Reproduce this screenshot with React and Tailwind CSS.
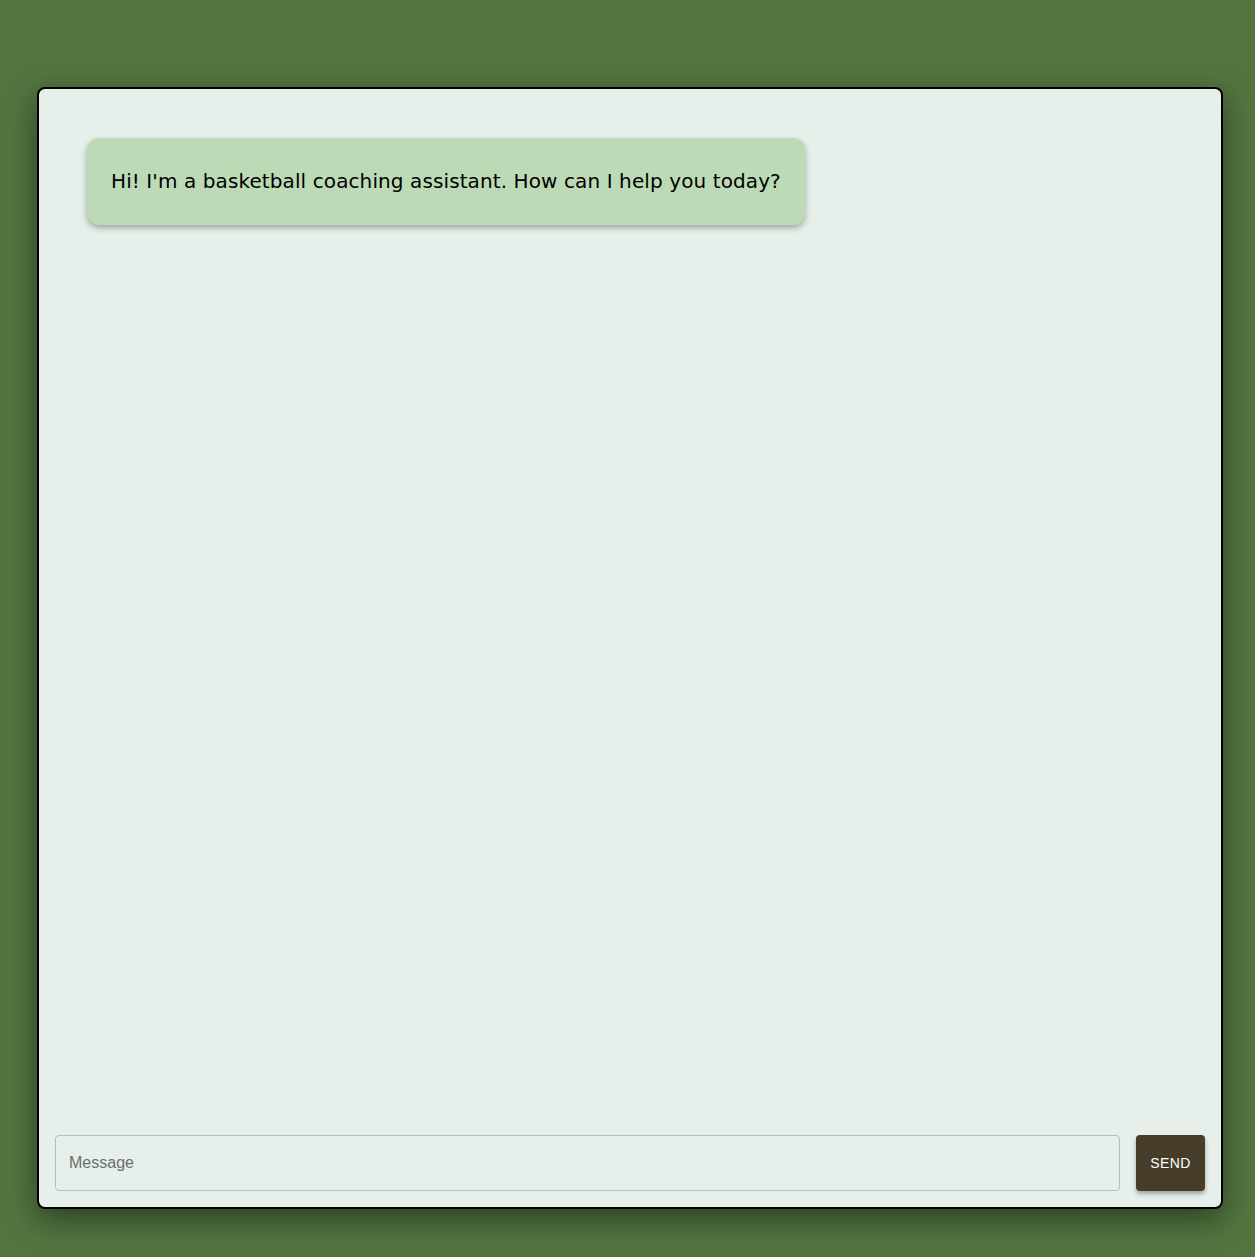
import React from "react";

export default function App() {
  return (
    <div className="w-[1255px] h-[1257px] bg-[#527540] pt-[87px] pl-[37px]">
      <div className="w-[1186px] h-[1122px] border-2 border-black rounded-[8px] bg-[#e6efe9] shadow-[0_10px_30px_rgba(0,0,0,0.45)] flex flex-col">
        <div className="flex-1 pl-[48px] pt-[49px]">
          <div
            className="inline-block bg-[#bcdab6] rounded-[12px] px-[24px] py-[30px] text-[20px] leading-[27px] tracking-[0.1px] text-black shadow-[0_3px_6px_rgba(0,0,0,0.3)]"
            style={{ fontFamily: "'DejaVu Sans', Verdana, sans-serif" }}
          >
            Hi! I'm a basketball coaching assistant. How can I help you today?
          </div>
        </div>
        <div className="flex gap-4 px-[16px] pb-[16px]">
          <div className="flex-1 h-[56px] border border-[#b9bdbb] rounded-[4px] flex items-center px-[13px]">
            <input
              placeholder="Message"
              className="w-full bg-transparent outline-none text-[16px] text-black placeholder:text-[#6b6f6d]"
              style={{ fontFamily: "'Liberation Sans', Arial, sans-serif" }}
            />
          </div>
          <button
            className="w-[69px] h-[56px] bg-[#453d2a] text-white rounded-[4px] text-[14px] tracking-[0.4px] shadow-[0_3px_4px_rgba(0,0,0,0.3)]"
            style={{ fontFamily: "'Liberation Sans', Arial, sans-serif" }}
          >
            SEND
          </button>
        </div>
      </div>
    </div>
  );
}
